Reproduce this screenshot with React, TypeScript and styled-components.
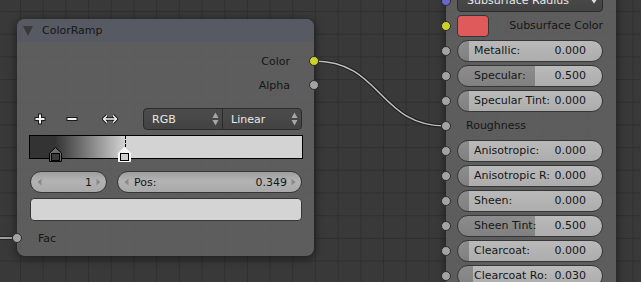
import React from 'react';
import styled, { createGlobalStyle } from 'styled-components';

const GlobalStyle = createGlobalStyle`
  html, body {
    margin: 0;
    padding: 0;
    background: #393939;
    overflow: hidden;
  }
  body {
    font-family: 'DejaVu Sans', 'Liberation Sans', sans-serif;
    font-size: 11px;
  }
`;

const Canvas = styled.div`
  position: relative;
  width: 641px;
  height: 282px;
  overflow: hidden;
  background-color: #393939;
  background-image: linear-gradient(to right, #303030 1px, transparent 1px),
    linear-gradient(to bottom, #303030 1px, transparent 1px);
  background-size: 22.7px 22.7px;
  background-position: 20px 11px;
`;

const Wires = styled.svg`
  position: absolute;
  left: 0;
  top: 0;
  pointer-events: none;
`;

const NodeFrame = styled.div<{ $left: number; $top: number; $width: number; $height?: number }>`
  position: absolute;
  left: ${({ $left }) => $left}px;
  top: ${({ $top }) => $top}px;
  width: ${({ $width }) => $width}px;
  ${({ $height }) => ($height ? `height: ${$height}px;` : '')}
  display: flex;
  flex-direction: column;
  background: rgba(99, 99, 99, 0.86);
  border-radius: 8px;
  box-shadow: 0 2px 8px 1px rgba(0, 0, 0, 0.45);
  color: #161616;
`;

const Header = styled.div`
  height: 23px;
  display: flex;
  align-items: center;
  gap: 9px;
  padding-left: 6px;
  background: rgba(86, 90, 99, 0.95);
  border-radius: 8px 8px 0 0;
`;

const CollapseArrow = styled.span`
  width: 0;
  height: 0;
  border-left: 5.5px solid transparent;
  border-right: 5.5px solid transparent;
  border-top: 10px solid #3a3a3a;
`;

const Body = styled.div<{ $pad: number }>`
  display: flex;
  flex-direction: column;
  padding: ${({ $pad }) => $pad}px 0;
`;

const SocketRow = styled.div<{ $right?: boolean; $height?: number; $top?: number }>`
  position: relative;
  height: ${({ $height }) => $height ?? 24}px;
  margin-top: ${({ $top }) => $top ?? 0}px;
  display: flex;
  align-items: center;
  justify-content: ${({ $right }) => ($right ? 'flex-end' : 'flex-start')};
  padding: 0 24px 0 21px;
`;

const Socket = styled.span<{ $color: string; $right?: boolean }>`
  position: absolute;
  top: 50%;
  ${({ $right }) => ($right ? 'right' : 'left')}: -5px;
  width: 10px;
  height: 10px;
  margin-top: -5px;
  box-sizing: border-box;
  border-radius: 50%;
  border: 1px solid #2a2a2a;
  background: ${({ $color }) => $color};
`;

const ToolRow = styled.div`
  display: flex;
  align-items: center;
  height: 22px;
  margin-top: 11px;
  padding: 0 12px 0 7px;
`;

const ToolButton = styled.div<{ $gap?: number }>`
  width: 32px;
  height: 22px;
  margin-left: ${({ $gap }) => $gap ?? 0}px;
  display: flex;
  align-items: center;
  justify-content: center;
`;

const Menu = styled.div`
  margin-left: auto;
  width: 159px;
  height: 22px;
  box-sizing: border-box;
  display: flex;
  border: 1px solid #2b2b2b;
  border-radius: 4px;
  background: linear-gradient(#4b4b4b, #434343);
  color: #e8e8e8;
`;

const MenuItem = styled.div`
  flex: 1;
  display: flex;
  align-items: center;
  justify-content: space-between;
  padding: 0 3px 0 8px;

  & + & {
    border-left: 1px solid #2b2b2b;
  }
`;

const Ramp = styled.div`
  position: relative;
  height: 24px;
  box-sizing: border-box;
  margin: 5px 11px 0 12px;
  border: 1px solid #000;
  background: linear-gradient(to right, #333 0%, #333 9.2%, #d3d3d3 34.9%, #d3d3d3 100%);
`;

const Marker = styled.svg`
  position: absolute;
  bottom: -4px;
  margin-left: -6.5px;
`;

const ActiveLine = styled.span`
  position: absolute;
  top: 0;
  height: 11px;
  border-left: 1px dashed #000;
`;

const NumRow = styled.div`
  display: flex;
  gap: 10px;
  height: 22px;
  margin: 12px 12px 0 13px;
`;

const NumField = styled.div<{ $grow?: boolean }>`
  flex: ${({ $grow }) => ($grow ? '1' : '0 0 77px')};
  display: flex;
  align-items: center;
  box-sizing: border-box;
  padding: 0 5px 0 6px;
  border: 1px solid #363636;
  border-radius: 11px;
  background: linear-gradient(#9e9e9e, #b3b3b3 45%, #a9a9a9);
`;

const NumLabel = styled.span`
  flex: 1;
  padding-left: 5px;
`;

const NumValue = styled.span`
  padding-right: 4px;
`;

const ColorSwatch = styled.div<{ $color: string; $width?: number }>`
  ${({ $width }) => ($width ? `width: ${$width}px;` : '')}
  height: 23px;
  box-sizing: border-box;
  border: 1px solid #353535;
  border-radius: 4px;
  background: ${({ $color }) => $color};
`;

const SwatchRow = styled.div`
  margin: 5px 12px 0 13px;
`;

const BsdfRow = styled.div`
  position: relative;
  height: 25px;
  display: flex;
  align-items: center;
  padding: 0 13px 0 11px;
`;

const DarkField = styled.div`
  flex: 1;
  height: 22px;
  box-sizing: border-box;
  display: flex;
  align-items: center;
  justify-content: space-between;
  padding: 0 4px 0 9px;
  border: 1px solid #2b2b2b;
  border-radius: 4px;
  background: linear-gradient(#4b4b4b, #434343);
  color: #e8e8e8;
`;

const Slider = styled.div`
  flex: 1;
  height: 22px;
  box-sizing: border-box;
  display: flex;
  align-items: center;
  justify-content: space-between;
  padding: 0 16px;
  border: 1px solid #363636;
  border-radius: 11px;
  background: linear-gradient(rgba(255, 255, 255, 0.05), rgba(0, 0, 0, 0.05)),
    linear-gradient(to right, #878787 var(--fill), #b6b6b6 var(--fill));
  white-space: nowrap;
`;

const PlainLabel = styled.span<{ $indent?: number }>`
  margin-left: ${({ $indent }) => $indent ?? 0}px;
`;

const PushRight = styled.span`
  margin-left: auto;
`;

const PlusIcon = () => (
  <svg width="14" height="14" viewBox="0 0 14 14">
    <path d="M7 1.5V12.5M1.5 7H12.5" stroke="#1b1b1b" strokeWidth="4" />
    <path d="M7 2.5V11.5M2.5 7H11.5" stroke="#f2f2f2" strokeWidth="2" />
  </svg>
);

const MinusIcon = () => (
  <svg width="14" height="14" viewBox="0 0 14 14">
    <path d="M1.5 7H12.5" stroke="#1b1b1b" strokeWidth="4" />
    <path d="M2.5 7H11.5" stroke="#f2f2f2" strokeWidth="2" />
  </svg>
);

const FlipIcon = () => (
  <svg width="18" height="12" viewBox="0 0 18 12">
    <path
      d="M2.5 6H15.5M6 2.5L2.5 6L6 9.5M12 2.5L15.5 6L12 9.5"
      stroke="#1b1b1b"
      strokeWidth="3.4"
      fill="none"
      strokeLinejoin="round"
    />
    <path
      d="M2.5 6H15.5M6 2.5L2.5 6L6 9.5M12 2.5L15.5 6L12 9.5"
      stroke="#f2f2f2"
      strokeWidth="1.4"
      fill="none"
      strokeLinejoin="round"
    />
  </svg>
);

const UpDown = () => (
  <svg width="7" height="16" viewBox="0 0 7 16">
    <path d="M0.5 7L3.5 1.5L6.5 7Z" fill="#a6a6a6" />
    <path d="M0.5 9L3.5 14.5L6.5 9Z" fill="#a6a6a6" />
  </svg>
);

const SideArrow = ({ right }: { right?: boolean }) => (
  <svg width="5" height="8" viewBox="0 0 5 8">
    <path d={right ? 'M0.5 0.5L4.5 4L0.5 7.5Z' : 'M4.5 0.5L0.5 4L4.5 7.5Z'} fill="#8a8a8a" />
  </svg>
);

const DownArrow = () => (
  <svg width="8" height="6" viewBox="0 0 8 6">
    <path d="M0.5 0.5H7.5L4 5.5Z" fill="#e0e0e0" />
  </svg>
);

const StopMarker = ({ pos, active, fill }: { pos: number; active?: boolean; fill: string }) => (
  <Marker width="13" height="15" viewBox="0 0 13 15" style={{ left: `${pos * 100}%` }}>
    <path
      d="M0.5 14.5V6L6.5 0.5L12.5 6V14.5Z"
      fill={active ? '#f4f4f4' : '#6c6c6c'}
      stroke={active ? '#ffffff' : '#000'}
    />
    <rect x="2.5" y="6.5" width="8" height="7" fill={fill} stroke="#000" />
  </Marker>
);

const sliders: Array<{ label: string; value: number; shown: string }> = [
  { label: 'Metallic:', value: 0, shown: '0.000' },
  { label: 'Specular:', value: 0.5, shown: '0.500' },
  { label: 'Specular Tint:', value: 0, shown: '0.000' },
];

const lowerSliders: Array<{ label: string; value: number; shown: string }> = [
  { label: 'Anisotropic:', value: 0, shown: '0.000' },
  { label: 'Anisotropic R:', value: 0, shown: '0.000' },
  { label: 'Sheen:', value: 0, shown: '0.000' },
  { label: 'Sheen Tint:', value: 0.5, shown: '0.500' },
  { label: 'Clearcoat:', value: 0, shown: '0.000' },
  { label: 'Clearcoat Ro:', value: 0.03, shown: '0.030' },
];

const SliderRow = ({ label, value, shown }: { label: string; value: number; shown: string }) => (
  <BsdfRow>
    <Socket $color="#a3a3a3" />
    <Slider style={{ '--fill': `${Math.round(11 + value * 132)}px` } as React.CSSProperties}>
      <span>{label}</span>
      <span>{shown}</span>
    </Slider>
  </BsdfRow>
);

const App = () => {
  return (
    <>
      <GlobalStyle />
      <Canvas>
        <Wires width="641" height="282" viewBox="0 0 641 282">
          <path d="M314 61C382 61 378 126 446 126" stroke="#1e1e1e" strokeWidth="3.6" fill="none" />
          <path d="M314 61C382 61 378 126 446 126" stroke="#bdbdbd" strokeWidth="1.6" fill="none" />
          <path d="M0 238H17" stroke="#1e1e1e" strokeWidth="3.6" />
          <path d="M0 238H17" stroke="#bdbdbd" strokeWidth="1.6" />
        </Wires>

        <NodeFrame $left={17} $top={19} $width={297}>
          <Header>
            <CollapseArrow />
            <span>ColorRamp</span>
          </Header>
          <Body $pad={7}>
            <SocketRow $right>
              Color
              <Socket $color="#cfcf2b" $right />
            </SocketRow>
            <SocketRow $right>
              Alpha
              <Socket $color="#a3a3a3" $right />
            </SocketRow>
            <ToolRow>
              <ToolButton>
                <PlusIcon />
              </ToolButton>
              <ToolButton>
                <MinusIcon />
              </ToolButton>
              <ToolButton $gap={6}>
                <FlipIcon />
              </ToolButton>
              <Menu>
                <MenuItem>
                  RGB
                  <UpDown />
                </MenuItem>
                <MenuItem>
                  Linear
                  <UpDown />
                </MenuItem>
              </Menu>
            </ToolRow>
            <Ramp>
              <ActiveLine style={{ left: '34.9%' }} />
              <StopMarker pos={0.092} fill="#3a3a3a" />
              <StopMarker pos={0.349} fill="#cfcfcf" active />
            </Ramp>
            <NumRow>
              <NumField>
                <SideArrow />
                <NumLabel />
                <NumValue>1</NumValue>
                <SideArrow right />
              </NumField>
              <NumField $grow>
                <SideArrow />
                <NumLabel>Pos:</NumLabel>
                <NumValue>0.349</NumValue>
                <SideArrow right />
              </NumField>
            </NumRow>
            <SwatchRow>
              <ColorSwatch $color="#d4d4d4" />
            </SwatchRow>
            <SocketRow $height={22} $top={6}>
              Fac
              <Socket $color="#a3a3a3" />
            </SocketRow>
          </Body>
        </NodeFrame>

        <NodeFrame $left={446} $top={-12} $width={170} $height={310}>
          <BsdfRow>
            <Socket $color="#6767cc" />
            <DarkField>
              Subsurface Radius
              <DownArrow />
            </DarkField>
          </BsdfRow>
          <BsdfRow>
            <Socket $color="#cfcf2b" />
            <ColorSwatch $color="#df5b5b" $width={32} style={{ height: 22 }} />
            <PushRight>Subsurface Color</PushRight>
          </BsdfRow>
          {sliders.map((each) => (
            <SliderRow key={each.label} {...each} />
          ))}
          <BsdfRow>
            <Socket $color="#a3a3a3" />
            <PlainLabel $indent={9}>Roughness</PlainLabel>
          </BsdfRow>
          {lowerSliders.map((each) => (
            <SliderRow key={each.label} {...each} />
          ))}
        </NodeFrame>
      </Canvas>
    </>
  );
};

export default App;
